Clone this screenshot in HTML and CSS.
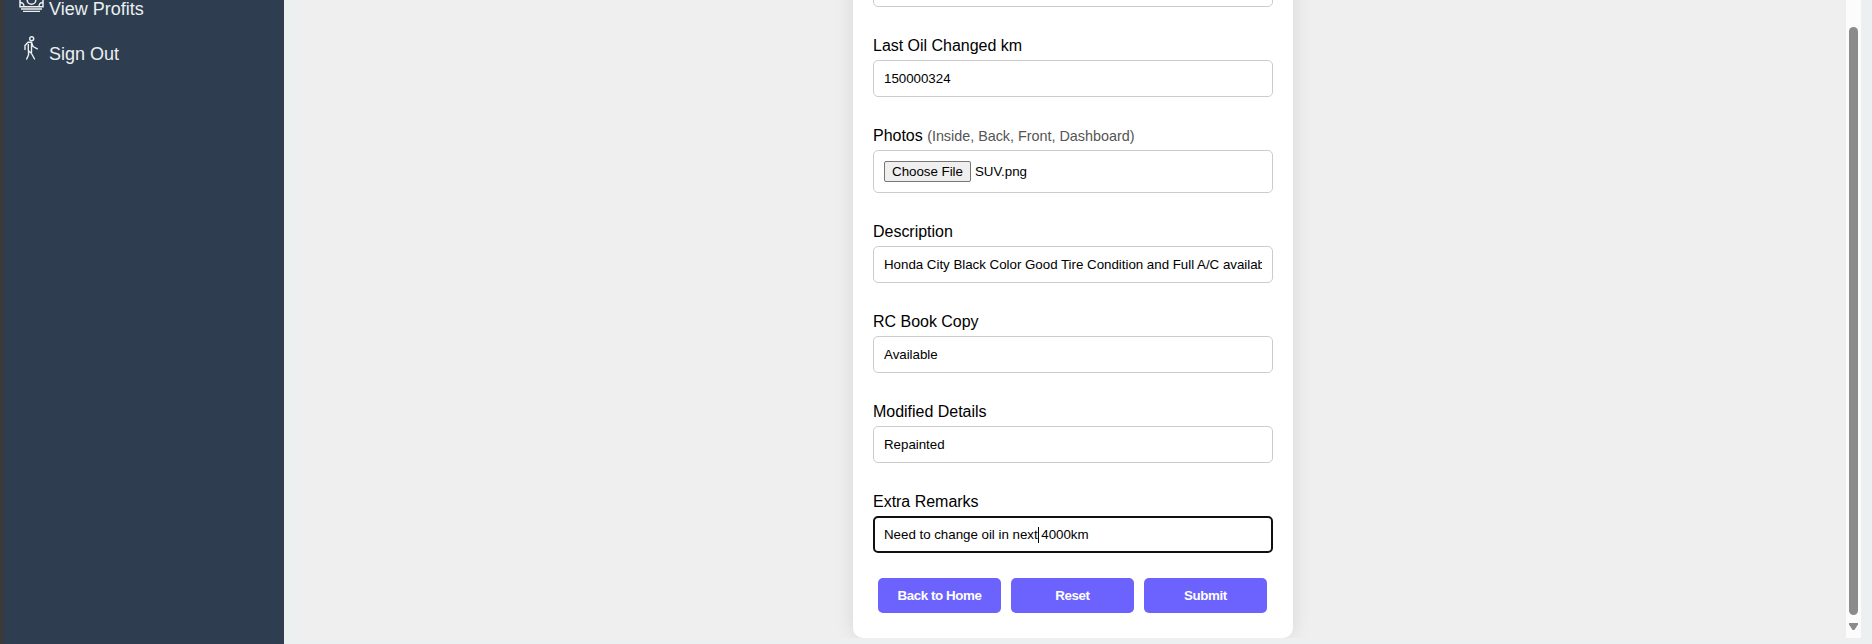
FILE: index.html
```html
<!DOCTYPE html>
<html lang="en">
<head>
<meta charset="utf-8">
<title>Vehicle Details</title>
<link rel="stylesheet" href="styles.css">
</head>
<body>
<div class="app">
  <nav class="sidebar">
    <a class="nav-item">
      <svg class="nav-icon money" viewBox="0 0 25 24" fill="none" stroke="#ecf0f1"><path d="M1 6v12.800h23V6z" stroke-width="1.500"/><circle cx="12.500" cy="12" r="4.300" stroke-width="1.500"/><path d="M1 14.500q4 0 4 4M24 14.500q-4 0-4 4" stroke-width="1.300"/><path d="M2 21h21M4 23.300h17" stroke-width="1.300"/></svg>
      <span>View Profits</span>
    </a>
    <a class="nav-item">
      <svg class="nav-icon walker" viewBox="0 0 15 24" fill="none" stroke="#ecf0f1" stroke-width="1.400" stroke-linecap="round" stroke-linejoin="round"><circle cx="7.700" cy="2.700" r="2"/><path d="M1 13.500V9.500L4 6.300H7.500L9 10.500L13.300 12.800M4.300 8.500V14.500L7.500 17.500L10.500 23M7.500 7V16.500M4.500 15.500V19L2.700 23"/></svg>
      <span>Sign Out</span>
    </a>
  </nav>
  <main class="frame">
    <div class="page">
      <form class="card">
        <div class="field"><div class="input"></div></div>
        <div class="field"><label>Last Oil Changed km</label><div class="input">150000324</div></div>
        <div class="field"><label>Photos <small>(Inside, Back, Front, Dashboard)</small></label><div class="input file"><span class="choose">Choose File</span><span>SUV.png</span></div></div>
        <div class="field"><label>Description</label><div class="input"><span class="clip">Honda City Black Color Good Tire Condition and Full A/C available</span></div></div>
        <div class="field"><label>RC Book Copy</label><div class="input">Available</div></div>
        <div class="field"><label>Modified Details</label><div class="input">Repainted</div></div>
        <div class="field last"><label>Extra Remarks</label><div class="input focused"><span>Need to change oil in next</span><i class="caret"></i><span>&nbsp;4000km</span></div></div>
        <div class="actions"><button type="button">Back to Home</button><button type="button">Reset</button><button type="button">Submit</button></div>
      </form>
    </div>
    <div class="scrollbar"><div class="thumb"></div><div class="arrow"></div></div>
  </main>
</div>
</body>
</html>
```
FILE: styles.css
```css
* { box-sizing: border-box; }
body { margin: 0; overflow: hidden; background: #ecf0f1; font-family: "Liberation Sans", Arial, sans-serif; }
.app { display: flex; height: 644px; }
.sidebar { width: 284px; border-left: 4px solid #3b3a3b; background: #2e3e50; color: #ecf0f1; font-size: 18px; overflow: hidden; }
.nav-item { display: flex; height: 45px; padding-left: 15px; }
.nav-item:first-child { margin-top: -12px; }
.nav-item span { line-height: 21px; padding-top: 11px; margin-left: 5px; white-space: nowrap; }
.nav-icon { display: block; height: 24px; }
.money { width: 25px; }
.walker { width: 15px; margin: 3px 5px 0; }
.frame { display: flex; flex: 1; height: 638px; margin: 0 11px 0 15px; overflow: hidden; }
.page { display: flex; flex: 1; align-items: flex-end; justify-content: center; padding-left: 1px; background: #efefef; overflow: hidden; }
.card { flex: none; width: 440px; padding: 20px 20px 25px; background: #fff; border-radius: 10px; box-shadow: 0 0 20px rgba(0, 0, 0, .1); }
.field { margin-bottom: 30px; }
.field.last { margin-bottom: 25px; }
label { display: block; height: 18px; margin-bottom: 5px; font-size: 16px; line-height: 18px; letter-spacing: -.02px; color: #000; white-space: nowrap; }
small { font-size: 14.4px; color: #555; }
.input { display: flex; align-items: center; height: 37px; padding: 0 10px; border: 1px solid #ccc; border-radius: 5px; font-size: 13.333px; letter-spacing: -.02px; color: #000; white-space: nowrap; }
.clip { overflow: hidden; }
.file { height: 43px; gap: 4px; }
.choose { width: 87px; height: 21px; border: 1px solid #767676; border-radius: 2px; background: #efefef; text-align: center; line-height: 19px; }
.focused { border: 2px solid #101010; padding: 0 9px; }
.caret { width: 1px; height: 16px; background: #000; margin-right: -1px; }
.actions { display: flex; gap: 10px; padding: 0 5px; }
button { width: 123px; height: 35px; padding: 0; border: 0; border-radius: 5px; background: #6c63ff; color: #fff; font: bold 13.333px "Liberation Sans", Arial, sans-serif; letter-spacing: -.4px; }
.scrollbar { display: flex; flex-direction: column; align-items: center; width: 15px; padding-top: 27px; background: #fcfcfc; }
.thumb { width: 9px; height: 588px; border-radius: 5px; background: #8b8b8b; }
.arrow { width: 9px; height: 7px; margin-top: 8px; background: #8b8b8b; clip-path: polygon(0 0, 100% 0, 100% 20%, 60% 100%, 40% 100%, 0 20%); }
```
